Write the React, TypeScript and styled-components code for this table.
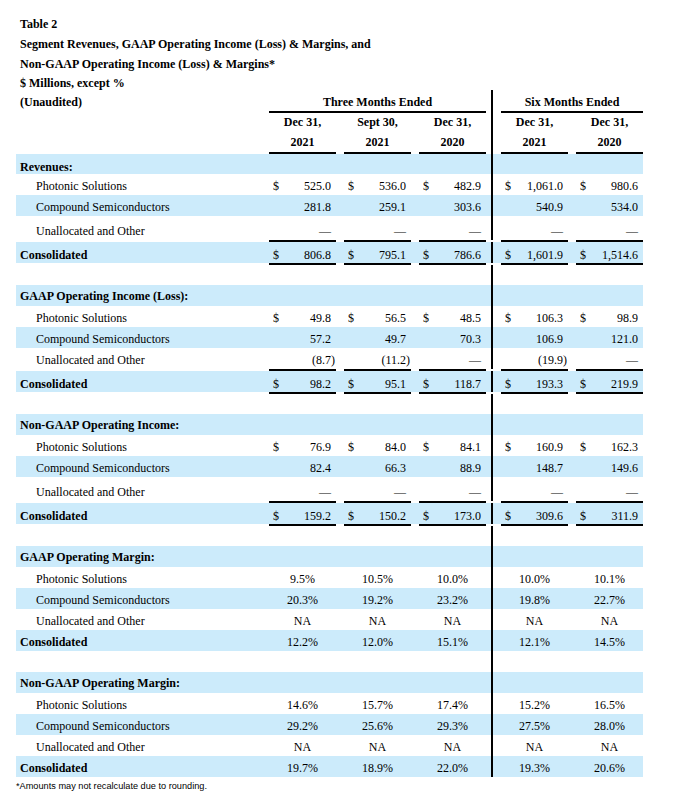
import React from "react";
import styled, { createGlobalStyle, css } from "styled-components";

const GlobalStyle = createGlobalStyle`
  html, body {
    margin: 0;
    padding: 0;
    background: #ffffff;
  }
  body {
    color: #000000;
    font-family: "Liberation Serif", "Times New Roman", serif;
    font-size: 12px;
  }
`;

const SHADE = "#ccebfb";

const Page = styled.div`
  padding: 14px 0 0 16px;
  width: 627px;
`;

const TitleBlock = styled.div`
  padding-left: 4px;
  font-weight: bold;
`;

const TitleLine = styled.div<{ $h: number; $lh: number }>`
  height: ${(p) => p.$h}px;
  line-height: ${(p) => p.$lh}px;
  white-space: nowrap;
`;

const Row = styled.div<{ $h: number; $pt: number; $shade?: boolean; $ruled?: boolean }>`
  --pt: ${(p) => p.$pt}px;
  display: flex;
  box-sizing: border-box;
  height: ${(p) => p.$h}px;
  line-height: 21px;
  background: ${(p) => (p.$shade ? SHADE : "transparent")};
  ${(p) =>
    p.$ruled &&
    css`
      padding: 2px 0;
      background-clip: content-box;
    `}
`;

const Label = styled.div<{ $indent?: boolean; $bold?: boolean }>`
  flex: 0 0 253px;
  box-sizing: border-box;
  padding-top: var(--pt);
  padding-left: ${(p) => (p.$indent ? 20 : 4)}px;
  font-weight: ${(p) => (p.$bold ? "bold" : "normal")};
  white-space: nowrap;
`;

const Group = styled.div<{ $w: number }>`
  flex: 0 0 ${(p) => p.$w}px;
  display: flex;
  gap: 8px;
`;

const Divider = styled.div`
  flex: 0 0 15px;
  background: linear-gradient(#000, #000) no-repeat 5px 0 / 2px 100%;
`;

const Cell = styled.div<{ $ruled?: boolean; $center?: boolean }>`
  flex: 0 0 67px;
  box-sizing: border-box;
  display: flex;
  justify-content: ${(p) => (p.$center ? "center" : "space-between")};
  padding: var(--pt) ${(p) => (p.$center ? "0" : "5px")} 0 ${(p) => (p.$center ? "0" : "4px")};
  white-space: nowrap;
  ${(p) =>
    p.$ruled &&
    css`
      margin: -2px 0;
      border-top: 2px solid #000;
      border-bottom: 2px solid #000;
    `}
`;

const Neg = styled.span`
  margin-right: -4px;
`;

const GroupHead = styled.div<{ $w: number }>`
  flex: 0 0 ${(p) => p.$w}px;
  box-sizing: border-box;
  padding-top: var(--pt);
  border-bottom: 2px solid #000;
  text-align: center;
  font-weight: bold;
  white-space: nowrap;
`;

const DateCell = styled.div`
  flex: 0 0 67px;
  box-sizing: border-box;
  border-bottom: 2px solid #000;
  line-height: 19.5px;
  text-align: center;
  font-weight: bold;
  white-space: nowrap;
`;

const Footnote = styled.div`
  padding-top: 2px;
  font-family: "Liberation Sans", Arial, sans-serif;
  font-size: 9.2px;
  line-height: 14px;
  white-space: nowrap;
`;

type Val = { d?: boolean; v: string };
type Line = {
  label: string;
  kind: "header" | "item" | "total";
  vals?: Val[];
  pct?: boolean;
};

const m = (v: string, d = false): Val => ({ d, v });
const dash = (): Val => ({ v: "—" });

type Section = { title: string; pct?: boolean; ruled: boolean; rows: { label: string; vals: Val[] }[] };

const sections: Section[] = [
  {
    title: "Revenues:",
    ruled: true,
    rows: [
      { label: "Photonic Solutions", vals: [m("525.0", true), m("536.0", true), m("482.9", true), m("1,061.0", true), m("980.6", true)] },
      { label: "Compound Semiconductors", vals: [m("281.8"), m("259.1"), m("303.6"), m("540.9"), m("534.0")] },
      { label: "Unallocated and Other", vals: [dash(), dash(), dash(), dash(), dash()] },
      { label: "Consolidated", vals: [m("806.8", true), m("795.1", true), m("786.6", true), m("1,601.9", true), m("1,514.6", true)] },
    ],
  },
  {
    title: "GAAP Operating Income (Loss):",
    ruled: true,
    rows: [
      { label: "Photonic Solutions", vals: [m("49.8", true), m("56.5", true), m("48.5", true), m("106.3", true), m("98.9", true)] },
      { label: "Compound Semiconductors", vals: [m("57.2"), m("49.7"), m("70.3"), m("106.9"), m("121.0")] },
      { label: "Unallocated and Other", vals: [m("(8.7)"), m("(11.2)"), dash(), m("(19.9)"), dash()] },
      { label: "Consolidated", vals: [m("98.2", true), m("95.1", true), m("118.7", true), m("193.3", true), m("219.9", true)] },
    ],
  },
  {
    title: "Non-GAAP Operating Income:",
    ruled: true,
    rows: [
      { label: "Photonic Solutions", vals: [m("76.9", true), m("84.0", true), m("84.1", true), m("160.9", true), m("162.3", true)] },
      { label: "Compound Semiconductors", vals: [m("82.4"), m("66.3"), m("88.9"), m("148.7"), m("149.6")] },
      { label: "Unallocated and Other", vals: [dash(), dash(), dash(), dash(), dash()] },
      { label: "Consolidated", vals: [m("159.2", true), m("150.2", true), m("173.0", true), m("309.6", true), m("311.9", true)] },
    ],
  },
  {
    title: "GAAP Operating Margin:",
    pct: true,
    ruled: false,
    rows: [
      { label: "Photonic Solutions", vals: [m("9.5%"), m("10.5%"), m("10.0%"), m("10.0%"), m("10.1%")] },
      { label: "Compound Semiconductors", vals: [m("20.3%"), m("19.2%"), m("23.2%"), m("19.8%"), m("22.7%")] },
      { label: "Unallocated and Other", vals: [m("NA"), m("NA"), m("NA"), m("NA"), m("NA")] },
      { label: "Consolidated", vals: [m("12.2%"), m("12.0%"), m("15.1%"), m("12.1%"), m("14.5%")] },
    ],
  },
  {
    title: "Non-GAAP Operating Margin:",
    pct: true,
    ruled: false,
    rows: [
      { label: "Photonic Solutions", vals: [m("14.6%"), m("15.7%"), m("17.4%"), m("15.2%"), m("16.5%")] },
      { label: "Compound Semiconductors", vals: [m("29.2%"), m("25.6%"), m("29.3%"), m("27.5%"), m("28.0%")] },
      { label: "Unallocated and Other", vals: [m("NA"), m("NA"), m("NA"), m("NA"), m("NA")] },
      { label: "Consolidated", vals: [m("19.7%"), m("18.9%"), m("22.0%"), m("19.3%"), m("20.6%")] },
    ],
  },
];

const dates: [string, string][] = [
  ["Dec 31,", "2021"],
  ["Sept 30,", "2021"],
  ["Dec 31,", "2020"],
  ["Dec 31,", "2021"],
  ["Dec 31,", "2020"],
];

function ValueCell({ val, pct, ruled }: { val: Val; pct?: boolean; ruled?: boolean }) {
  if (pct) {
    return (
      <Cell $center $ruled={ruled}>
        {val.v}
      </Cell>
    );
  }
  const neg = val.v.startsWith("(");
  return (
    <Cell $ruled={ruled}>
      <span>{val.d ? "$" : ""}</span>
      {neg ? <Neg>{val.v}</Neg> : <span>{val.v}</span>}
    </Cell>
  );
}

function Cells({ vals, pct, ruled }: { vals: Val[]; pct?: boolean; ruled?: boolean }) {
  return (
    <>
      <Group $w={217}>
        {vals.slice(0, 3).map((v, i) => (
          <ValueCell key={i} val={v} pct={pct} ruled={ruled} />
        ))}
      </Group>
      <Divider />
      <Group $w={142}>
        {vals.slice(3).map((v, i) => (
          <ValueCell key={i} val={v} pct={pct} ruled={ruled} />
        ))}
      </Group>
    </>
  );
}

function EmptyCells() {
  return (
    <>
      <Group $w={217} />
      <Divider />
      <Group $w={142} />
    </>
  );
}

function SectionBlock({ s, index }: { s: Section; index: number }) {
  const [photonic, compound, unalloc, total] = s.rows;
  const tallUnalloc = s.ruled && unalloc.vals.every((v) => v.v === "—");
  return (
    <>
      {index > 0 && (
        <Row $h={index === 4 ? 21 : 20} $pt={0}>
          <Label />
          <EmptyCells />
        </Row>
      )}
      <Row $h={index === 0 ? 20 : 21} $pt={index === 0 ? 2.5 : 0.5} $shade>
        <Label $bold>{s.title}</Label>
        <EmptyCells />
      </Row>
      <Row $h={21} $pt={1.5}>
        <Label $indent>{photonic.label}</Label>
        <Cells vals={photonic.vals} pct={s.pct} />
      </Row>
      <Row $h={21} $pt={1.5} $shade>
        <Label $indent>{compound.label}</Label>
        <Cells vals={compound.vals} pct={s.pct} />
      </Row>
      <Row $h={tallUnalloc ? 24 : 21} $pt={tallUnalloc ? 4.5 : 1.5}>
        <Label $indent>{unalloc.label}</Label>
        <Cells vals={unalloc.vals} pct={s.pct} />
      </Row>
      <Row $h={s.ruled ? 25 : 21} $pt={s.ruled ? 2.5 : 1.5} $shade $ruled={s.ruled}>
        <Label $bold>{total.label}</Label>
        <Cells vals={total.vals} pct={s.pct} ruled={s.ruled} />
      </Row>
    </>
  );
}

export default function App() {
  return (
    <>
      <GlobalStyle />
      <Page>
        <TitleBlock>
          <TitleLine $h={21} $lh={21}>Table 2</TitleLine>
          <TitleLine $h={19.5} $lh={19.5}>
            Segment Revenues, GAAP Operating Income (Loss) &amp; Margins, and
          </TitleLine>
          <TitleLine $h={19.5} $lh={19.5}>
            Non-GAAP Operating Income (Loss) &amp; Margins*
          </TitleLine>
          <TitleLine $h={16} $lh={18}>$ Millions, except %</TitleLine>
        </TitleBlock>

        <Row $h={23} $pt={1.5}>
          <Label $bold>(Unaudited)</Label>
          <GroupHead $w={217}>Three Months Ended</GroupHead>
          <Divider />
          <GroupHead $w={142}>Six Months Ended</GroupHead>
        </Row>

        <Row $h={41} $pt={0}>
          <Label />
          <Group $w={217}>
            {dates.slice(0, 3).map(([a, b], i) => (
              <DateCell key={i}>
                {a}
                <br />
                {b}
              </DateCell>
            ))}
          </Group>
          <Divider />
          <Group $w={142}>
            {dates.slice(3).map(([a, b], i) => (
              <DateCell key={i}>
                {a}
                <br />
                {b}
              </DateCell>
            ))}
          </Group>
        </Row>

        {sections.map((s, i) => (
          <SectionBlock key={s.title} s={s} index={i} />
        ))}

        <Footnote>*Amounts may not recalculate due to rounding.</Footnote>
      </Page>
    </>
  );
}
